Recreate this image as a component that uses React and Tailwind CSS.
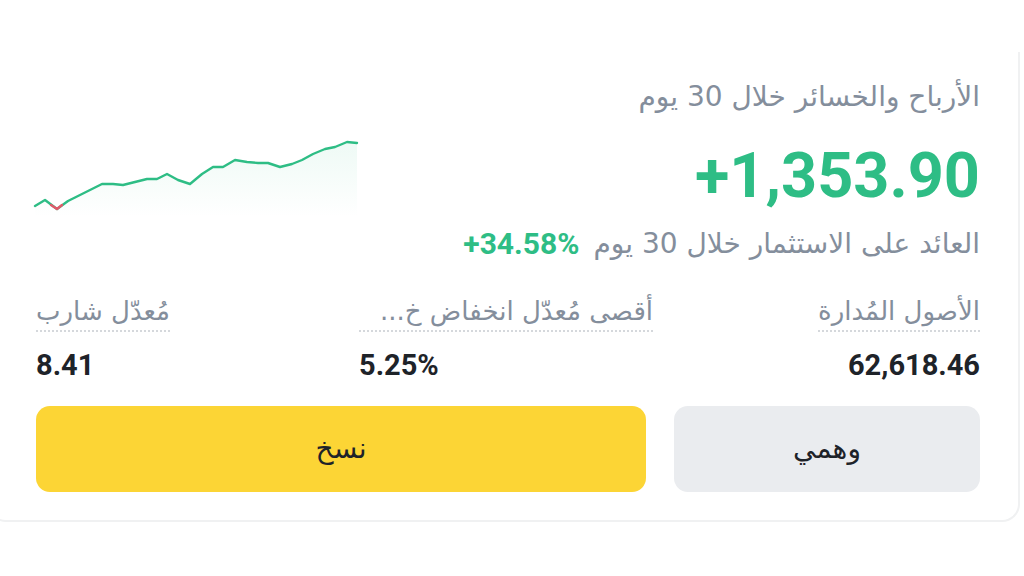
import React from 'react';

const pts = [
  [35, 205], [45, 199], [57, 208], [68, 200], [80, 194], [90, 189], [102, 183], [113, 183],
  [123, 184], [135, 181], [147, 178], [157, 178], [167, 173], [178, 179], [190, 183], [202, 173],
  [213, 166], [223, 166], [235, 159], [247, 161], [258, 162], [268, 162], [280, 166], [292, 163],
  [302, 159], [313, 153], [325, 148], [335, 146], [347, 141], [357, 142],
];

const Sparkline = () => {
  const ox = 36;
  const oy = 136;
  const line = pts.map(([x, y]) => `${x - ox},${y - oy}`).join(' ');
  const area = `${line} ${357 - ox},${80} ${35 - ox},${80}`;
  return (
    <svg width="335" height="80" viewBox="0 0 335 80" className="block overflow-visible">
      <defs>
        <linearGradient id="fill" x1="0" y1="0" x2="0" y2="1">
          <stop offset="0%" stopColor="#2ebd85" stopOpacity="0.08" />
          <stop offset="100%" stopColor="#2ebd85" stopOpacity="0" />
        </linearGradient>
      </defs>
      <polygon points={area} fill="url(#fill)" />
      <polyline points={line} fill="none" stroke="#2ebd85" strokeWidth="2.4" strokeLinejoin="round" strokeLinecap="round" />
      <polyline points="15,68 21,72 26,68" fill="none" stroke="#e05a6a" strokeWidth="2.4" strokeLinejoin="round" strokeLinecap="round" />
    </svg>
  );
};

const Stat = ({ label, value, align, width = '' }) => (
  <div className={`flex flex-col ${align} ${width}`}>
    <div className="self-stretch whitespace-nowrap border-b-2 border-dotted border-[#d5d8dc] pb-[2px] text-[26px] leading-[34px] text-[#848e9c]">
      {label}
    </div>
    <div dir="ltr" className="mt-[16px] text-[29px] font-bold leading-[34px] text-[#1e2329] [font-family:Roboto,'DejaVu_Sans',sans-serif]">
      {value}
    </div>
  </div>
);

export default function App() {
  return (
    <div className="h-[576px] w-full overflow-hidden bg-white pt-[52px] pr-[4px] [font-family:'DejaVu_Sans','Noto_Sans',sans-serif]">
      <div dir="rtl" className="-ml-[12px] h-[470px] rounded-b-[18px] border-r-2 border-b-2 border-l-2 border-[#f0f1f2] pr-[38px] pl-[46px] pt-[26px]">
        <div className="flex items-start justify-between">
          <div className="flex flex-col items-start">
            <div className="text-[28px] leading-[38px] text-[#848e9c]">الأرباح والخسائر خلال 30 يوم</div>
            <div dir="ltr" className="mt-[24px] text-[63px] font-bold leading-[72px] text-[#2ebd85] [font-family:Roboto,sans-serif]">
              +1,353.90
            </div>
          </div>
          <div className="mt-[59px]">
            <Sparkline />
          </div>
        </div>
        <div className="mt-[8px] flex items-center gap-[14px]">
          <span className="text-[28px] leading-[38px] text-[#848e9c]">العائد على الاستثمار خلال 30 يوم</span>
          <span dir="ltr" className="text-[30px] font-bold leading-[38px] text-[#2ebd85] [font-family:Roboto,sans-serif]">+34.58%</span>
        </div>
        <div className="mt-[31px] flex items-start justify-between">
          <Stat label="الأصول المُدارة" value="62,618.46" align="items-start" />
          <Stat label="أقصى مُعدّل انخفاض خ..." value="5.25%" align="items-end" width="w-[294px] ml-[24px]" />
          <Stat label="مُعدّل شارب" value="8.41" align="items-end" />
        </div>
        <div className="mt-[24px] flex gap-[28px]">
          <button className="flex h-[86px] w-[306px] items-center justify-center rounded-[14px] bg-[#eaecef] text-[28px] text-[#1e2329]">
            وهمي
          </button>
          <button className="flex h-[86px] flex-1 items-center justify-center rounded-[14px] bg-[#fcd535] text-[28px] text-[#1e2329]">
            نسخ
          </button>
        </div>
      </div>
    </div>
  );
}
